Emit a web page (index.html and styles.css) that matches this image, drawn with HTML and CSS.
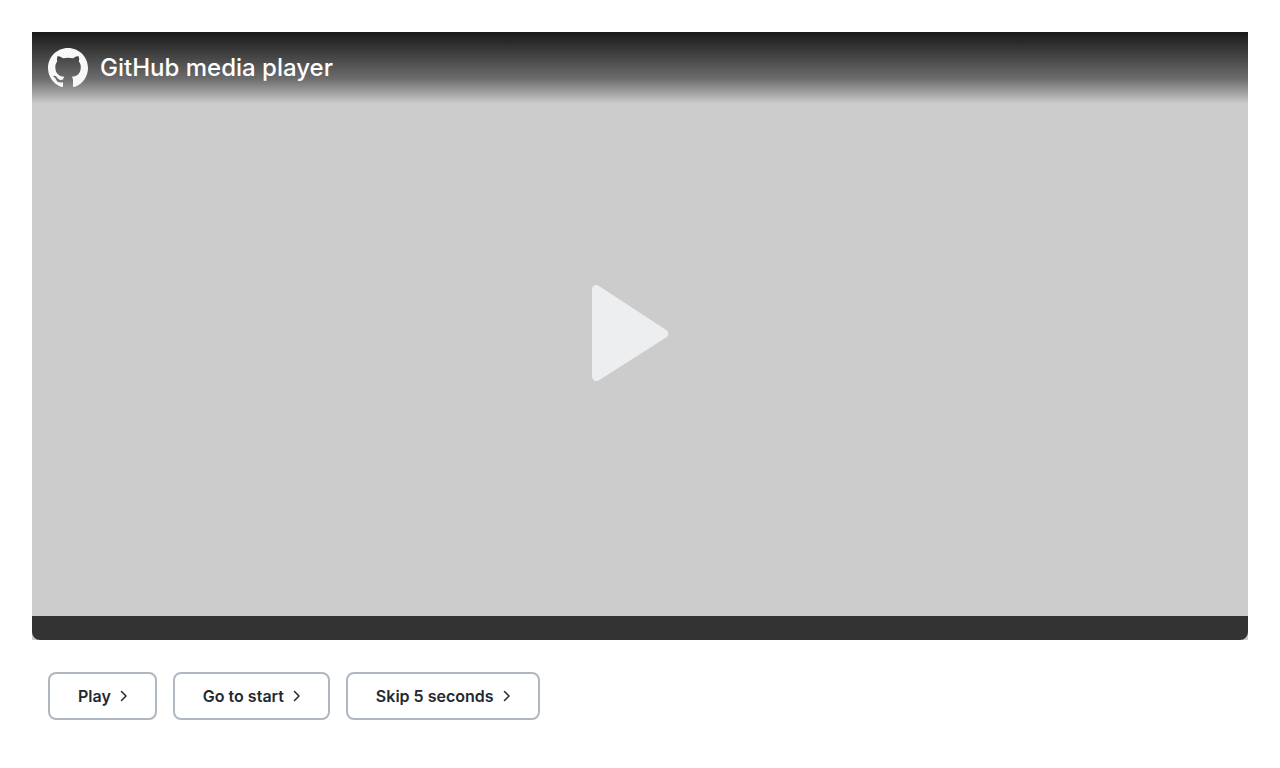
FILE: index.html
```html
<!DOCTYPE html>
<html lang="en">
<head>
<meta charset="utf-8">
<meta name="viewport" content="width=device-width, initial-scale=1">
<title>GitHub media player</title>
<link rel="stylesheet" href="styles.css">
</head>
<body>
<main class="page">
  <section class="player" aria-label="GitHub media player">
    <header class="player-header">
      <svg class="logo" viewBox="0 0 16 16" aria-hidden="true"><path d="M8 0c4.42 0 8 3.58 8 8a8.013 8.013 0 0 1-5.45 7.59c-.4.08-.55-.17-.55-.38 0-.27.01-1.13.01-2.2 0-.75-.25-1.23-.54-1.48 1.78-.2 3.65-.88 3.65-3.95 0-.88-.31-1.59-.82-2.15.08-.2.36-1.02-.08-2.12 0 0-.67-.22-2.2.82-.64-.18-1.32-.27-2-.27-.68 0-1.36.09-2 .27-1.53-1.03-2.2-.82-2.2-.82-.44 1.1-.16 1.92-.08 2.12-.51.56-.82 1.28-.82 2.15 0 3.06 1.86 3.75 3.64 3.95-.23.2-.44.55-.51 1.07-.46.21-1.61.55-2.33-.66-.15-.24-.6-.83-1.23-.82-.67.01-.27.38.01.53.34.19.73.9.82 1.13.16.45.68 1.31 2.69.94 0 .67.01 1.3.01 1.49 0 .21-.15.45-.55.38A7.995 7.995 0 0 1 0 8c0-4.42 3.58-8 8-8Z"/></svg>
      <h1 class="title">GitHub media player</h1>
    </header>
    <button class="play-overlay" type="button" aria-label="Play video">
      <svg class="play-icon" viewBox="0 0 96 96" aria-hidden="true"><path d="M0 4.500C0 .8 3.800-1.200 7 1L74.500 45.200C77 47 77 50.500 74.500 52.200L7 95.200C3.800 97.200 0 95.200 0 91.500Z"/></svg>
    </button>
    <div class="controls"></div>
  </section>
  <div class="actions">
    <button class="button" type="button">Play<svg class="chevron" viewBox="0 0 16 16" aria-hidden="true"><path d="M6.500 3.500 11 8 6.500 12.500"/></svg></button>
    <button class="button" type="button">Go to start<svg class="chevron" viewBox="0 0 16 16" aria-hidden="true"><path d="M6.500 3.500 11 8 6.500 12.500"/></svg></button>
    <button class="button" type="button">Skip 5 seconds<svg class="chevron" viewBox="0 0 16 16" aria-hidden="true"><path d="M6.500 3.500 11 8 6.500 12.500"/></svg></button>
  </div>
</main>
</body>
</html>
```
FILE: styles.css
```css
* { box-sizing: border-box; }

body {
  margin: 0;
  background: #fff;
  color: #24292f;
  font-family: Inter, "Liberation Sans", sans-serif;
}

.page { padding: 32px; }

.player {
  display: grid;
  aspect-ratio: 2 / 1;
  background: #ccc;
}

.player > * { grid-area: 1 / 1; }

.player-header {
  display: flex;
  align-items: center;
  align-self: start;
  gap: 12px;
  padding: 16px;
  background: linear-gradient(rgba(0, 0, 0, 0.88), rgba(0, 0, 0, 0.47) 65%, rgba(0, 0, 0, 0));
}

.logo {
  width: 40px;
  height: 40px;
  fill: #f6f8fa;
}

.title {
  margin: 0;
  color: #fff;
  font-size: 24px;
  font-weight: 500;
  line-height: 40px;
}

.play-overlay {
  place-self: center;
  padding: 0 0 6px;
  border: 0;
  background: none;
  cursor: pointer;
}

.play-icon {
  display: block;
  width: 96px;
  height: 96px;
  fill: #edeef0;
}

.controls {
  align-self: end;
  height: 24px;
  border-radius: 0 0 8px 8px;
  background: #333;
}

.actions {
  display: flex;
  flex-wrap: wrap;
  gap: 16px;
  padding: 32px 16px;
}

.button {
  display: flex;
  align-items: center;
  gap: 4px;
  height: 48px;
  padding: 0 24px 0 28px;
  border: 2px solid #afb8c1;
  border-radius: 8px;
  background: #fff;
  color: #24292f;
  font: inherit;
  font-size: 16px;
  font-weight: 600;
  cursor: pointer;
}

.chevron {
  width: 16px;
  height: 16px;
  fill: none;
  stroke: currentColor;
  stroke-width: 1.5;
  stroke-linecap: round;
  stroke-linejoin: round;
}
```
